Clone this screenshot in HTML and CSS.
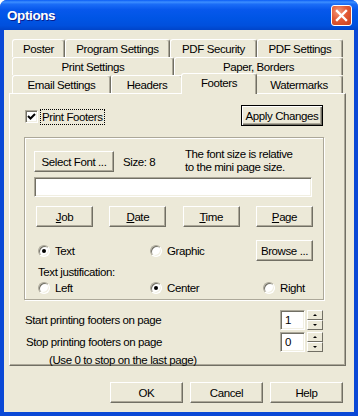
FILE: index.html
```html
<!DOCTYPE html>
<html lang="en">
  <head>
    <meta charset="UTF-8" />
    <title>Options</title>
    <link rel="stylesheet" href="styles.css">
  </head>
  <body>
    <div class="window">
      <div class="titlebar">
        <span class="title">Options</span>
        <button class="close" aria-label="Close">
          <svg width="13" height="13" viewBox="0 0 13 13">
            <path d="M2 2 L11 11 M11 2 L2 11" stroke="#fff" stroke-width="2.4" stroke-linecap="square" />
          </svg>
        </button>
      </div>

      <div class="client">
        <div class="tabs">
          <div class="tab-row row-1">
            <div class="tab">Poster</div>
            <div class="tab">Program Settings</div>
            <div class="tab">PDF Security</div>
            <div class="tab">PDF Settings</div>
          </div>
          <div class="tab-row row-2">
            <div class="tab">Print Settings</div>
            <div class="tab">Paper, Borders</div>
          </div>
          <div class="tab-row row-3">
            <div class="tab">Email Settings</div>
            <div class="tab">Headers</div>
            <div class="tab active">Footers</div>
            <div class="tab">Watermarks</div>
          </div>
        </div>

        <div class="panel">
          <div class="top-row">
            <label class="check">
              <span class="checkbox">
                <svg width="9" height="9" viewBox="0 0 9 9">
                  <path d="M1 4 L3.5 6.5 L8 2" fill="none" stroke="#000" stroke-width="2" />
                </svg>
              </span>
              <span class="focus">Print Footers</span>
            </label>
            <button class="btn default">Apply Changes</button>
          </div>

          <div class="groupbox">
            <div class="font-row">
              <button class="btn font-btn">Select Font ...</button>
              <span class="size">Size: 8</span>
              <span class="hint">The font size is relative<br />to the mini page size.</span>
            </div>
            <div class="text-input"></div>
            <div class="field-row">
              <button class="btn field"><u>J</u>ob</button>
              <button class="btn field"><u>D</u>ate</button>
              <button class="btn field"><u>T</u>ime</button>
              <button class="btn field"><u>P</u>age</button>
            </div>
            <div class="kind-row">
              <label class="radio-item"><span class="radio on"></span>Text</label>
              <label class="radio-item"><span class="radio"></span>Graphic</label>
              <button class="btn field">Browse ...</button>
            </div>
            <div class="just-label">Text justification:</div>
            <div class="just-row">
              <label class="radio-item"><span class="radio"></span>Left</label>
              <label class="radio-item"><span class="radio on"></span>Center</label>
              <label class="radio-item"><span class="radio"></span>Right</label>
            </div>
          </div>

          <div class="page-row">
            <span>Start printing footers on page</span>
            <div class="spin">
              <div class="spin-value">1</div>
              <div class="spin-btns">
                <span class="spin-up"></span>
                <span class="spin-down"></span>
              </div>
            </div>
          </div>
          <div class="page-row stop">
            <span>Stop printing footers on page</span>
            <div class="spin">
              <div class="spin-value">0</div>
              <div class="spin-btns">
                <span class="spin-up"></span>
                <span class="spin-down"></span>
              </div>
            </div>
          </div>
          <div class="note">(Use 0 to stop on the last page)</div>
        </div>

        <div class="actions">
          <button class="btn action">OK</button>
          <button class="btn action">Cancel</button>
          <button class="btn action">Help</button>
        </div>
      </div>
    </div>
  </body>
</html>
```

FILE: styles.css
```css
:root {
  --face: #ece9d8;
  --light: #ffffff;
  --shadow: #aca899;
  --dark: #716f64;
  --frame: #0a48d6;
}

* {
  box-sizing: border-box;
}

body {
  margin: 0;
  background: #ffffff;
  font-family: "Liberation Sans", Arial, sans-serif;
  font-size: 11.5px;
  letter-spacing: -0.4px;
  color: #000000;
}

.window {
  width: 358px;
  height: 416px;
  display: flex;
  flex-direction: column;
  background: var(--frame);
  border-radius: 7px 7px 0 0;
  overflow: hidden;
}

.titlebar {
  height: 30px;
  flex: none;
  display: flex;
  align-items: center;
  justify-content: space-between;
  padding: 0 6px 0 7px;
  background: linear-gradient(180deg, #0a5cf5 0%, #3d8fff 7%, #1b6df7 14%, #0758ec 32%, #0055e5 60%, #0050dd 85%, #0044c9 100%);
}

.title {
  color: #ffffff;
  font-weight: bold;
  font-size: 13.5px;
  letter-spacing: -0.4px;
  text-shadow: 1px 1px #0a1e8c;
  margin-top: 1px;
}

.close {
  width: 21px;
  height: 21px;
  padding: 0;
  border: 1px solid #ffffff;
  border-radius: 3px;
  background: radial-gradient(circle at 35% 30%, #f39a7c 0%, #e35a35 45%, #c7401d 100%);
  display: flex;
  align-items: center;
  justify-content: center;
}

.client {
  flex: 1;
  margin: 0 4px 4px;
  background: var(--face);
  display: flex;
  flex-direction: column;
}

/* tabs */

.tabs {
  margin: 9px 11px 0 8px;
}

.tab-row {
  display: grid;
  height: 18px;
}

.row-1 {
  grid-template-columns: 53px 105px 87px 86px;
}

.row-2 {
  grid-template-columns: 162px 169px;
}

.row-3 {
  grid-template-columns: 99px 72px 72px 88px;
}

.tab {
  display: flex;
  align-items: center;
  justify-content: center;
  padding-top: 1px;
  background: var(--face);
  border-top: 1px solid var(--light);
  border-left: 1px solid var(--light);
  border-right: 1px solid var(--dark);
  border-radius: 3px 3px 0 0;
  box-shadow: inset -1px 0 var(--shadow);
}

.tab.active {
  position: relative;
  z-index: 1;
  margin: -2px -2px -1px;
  padding: 0 0 3px;
}

/* panel */

.panel {
  margin: 0 8px 0 5px;
  height: 273px;
  border: 1px solid;
  border-color: var(--light) var(--dark) var(--dark) var(--light);
  box-shadow: inset -1px -1px var(--shadow);
}

.top-row {
  display: flex;
  align-items: center;
  justify-content: space-between;
  height: 21px;
  margin: 11px 22px 0 15px;
}

.check {
  display: flex;
  align-items: center;
}

.checkbox {
  width: 13px;
  height: 13px;
  margin-top: 2px;
  background: var(--light);
  border: 1px solid;
  border-color: var(--shadow) var(--light) var(--light) var(--shadow);
  box-shadow: inset 1px 1px var(--dark), inset -1px -1px #f1efe2;
  display: flex;
  align-items: center;
  justify-content: center;
}

.focus {
  margin-left: 3px;
  margin-top: 2px;
  padding: 0 1px;
  line-height: 14px;
  outline: 1px dotted #000000;
}

.btn {
  font: inherit;
  letter-spacing: inherit;
  color: #000000;
  background: var(--face);
  height: 21px;
  padding: 0;
  border: 1px solid;
  border-color: var(--light) var(--dark) var(--dark) var(--light);
  box-shadow: inset -1px -1px var(--shadow);
}

.btn.default {
  width: 82px;
  border: 1px solid #000000;
  box-shadow: inset 1px 1px var(--light), inset -1px -1px var(--dark), inset -2px -2px var(--shadow);
}

/* group box */

.groupbox {
  width: 300px;
  height: 163px;
  margin: 11px 0 0 14px;
  padding: 13px 0 0 9px;
  border: 1px solid var(--shadow);
  box-shadow: inset 1px 1px var(--light), 1px 1px var(--light);
}

.font-row {
  display: flex;
  align-items: center;
  height: 21px;
}

.font-btn {
  width: 80px;
}

.size {
  width: 71px;
  padding-left: 9px;
}

.hint {
  line-height: 13px;
  margin-top: -1px;
}

.text-input {
  width: 278px;
  height: 20px;
  margin-top: 5px;
  background: var(--light);
  border: 1px solid;
  border-color: var(--shadow) var(--light) var(--light) var(--shadow);
  box-shadow: inset 1px 1px var(--dark), inset -1px -1px #f1efe2;
}

.field-row {
  display: flex;
  justify-content: space-between;
  width: 277px;
  margin: 9px 0 0 2px;
}

.field {
  width: 57px;
}

.kind-row {
  display: grid;
  grid-template-columns: 112px 106px 57px;
  align-items: center;
  margin: 13px 0 0 4px;
}

.radio-item {
  display: flex;
  align-items: center;
}

.radio {
  width: 12px;
  height: 12px;
  margin-right: 5px;
  border-radius: 50%;
  background: var(--light);
  border: 1px solid;
  border-color: var(--shadow) var(--light) var(--light) var(--shadow);
  box-shadow: inset 1px 1px var(--dark), inset -1px -1px #f1efe2;
  display: flex;
  align-items: center;
  justify-content: center;
}

.radio.on::after {
  content: "";
  width: 4px;
  height: 4px;
  border-radius: 50%;
  background: #000000;
}

.just-label {
  margin: 5px 0 0 4px;
  line-height: 13px;
}

.just-row {
  display: grid;
  grid-template-columns: 112px 113px auto;
  height: 14px;
  align-items: center;
  margin: 2px 0 0 4px;
}

/* page range */

.page-row {
  display: flex;
  align-items: center;
  justify-content: space-between;
  height: 20px;
  margin: 10px 22px 0 15px;
}

.page-row.stop {
  margin-top: 2px;
  padding-left: 1px;
}

.spin {
  display: flex;
  gap: 2px;
}

.spin-value {
  width: 25px;
  height: 20px;
  padding: 3px 0 0 4px;
  background: var(--light);
  border: 1px solid;
  border-color: var(--shadow) var(--light) var(--light) var(--shadow);
  box-shadow: inset 1px 1px var(--dark), inset -1px -1px #f1efe2;
}

.spin-btns {
  width: 16px;
  height: 20px;
  display: flex;
  flex-direction: column;
}

.spin-up,
.spin-down {
  flex: 1;
  display: flex;
  align-items: center;
  justify-content: center;
  border: 1px solid;
  border-color: var(--light) var(--dark) var(--dark) var(--light);
  background: var(--face);
}

.spin-up::after {
  content: "";
  border: 2px solid transparent;
  border-bottom: 2px solid #000000;
  border-top: none;
}

.spin-down::after {
  content: "";
  border: 2px solid transparent;
  border-top: 2px solid #000000;
  border-bottom: none;
}

.note {
  margin: 2px 0 0 39px;
  line-height: 13px;
}

.actions {
  display: flex;
  justify-content: flex-end;
  gap: 7px;
  margin: 16px 11px 0 0;
}

.action {
  width: 73px;
}
```
